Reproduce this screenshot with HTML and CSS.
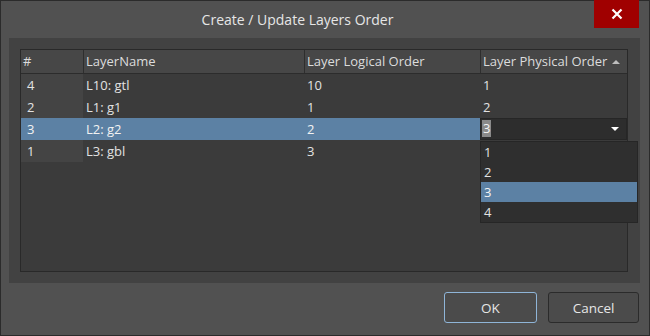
FILE: index.html
```html
<!DOCTYPE html>
<html>
<head>
<meta charset="utf-8">
<link rel="stylesheet" href="styles.css">
</head>
<body>
<div class="window">
  <div class="titlebar">
    <div class="title">Create / Update Layers Order</div>
    <div class="close"><svg width="12" height="12" viewBox="0 0 12 12"><path d="M1.5 1.5 L10.5 10.5 M10.5 1.5 L1.5 10.5" stroke="#fff" stroke-width="2.2"/></svg></div>
  </div>
  <div class="panel">
    <div class="grid">
      <div class="row header">
        <div class="cell c1">#</div>
        <div class="cell c2 sep">LayerName</div>
        <div class="cell c3 sep">Layer Logical Order</div>
        <div class="cell c4 sep">Layer Physical Order<span class="sort"></span></div>
      </div>
      <div class="row">
        <div class="cell c1 idx">4</div>
        <div class="cell c2">L10: gtl</div>
        <div class="cell c3">10</div>
        <div class="cell c4">1</div>
      </div>
      <div class="row">
        <div class="cell c1 idx">2</div>
        <div class="cell c2">L1: g1</div>
        <div class="cell c3">1</div>
        <div class="cell c4">2</div>
      </div>
      <div class="row selected">
        <div class="cell c1 idx">3</div>
        <div class="cell c2">L2: g2</div>
        <div class="cell c3">2</div>
        <div class="cell c4 editor">
          <span class="edit-val">3</span>
          <span class="drop-arrow"></span>
          <div class="dropdown">
            <div class="opt">1</div>
            <div class="opt">2</div>
            <div class="opt hot">3</div>
            <div class="opt">4</div>
          </div>
        </div>
      </div>
      <div class="row">
        <div class="cell c1 idx">1</div>
        <div class="cell c2">L3: gbl</div>
        <div class="cell c3">3</div>
        <div class="cell c4"></div>
      </div>
    </div>
  </div>
  <div class="footer">
    <button class="btn ok">OK</button>
    <button class="btn">Cancel</button>
  </div>
</div>
</body>
</html>
```
FILE: styles.css
```css
html, body {
  margin: 0;
  padding: 0;
  background: #2a2a2a;
}
body {
  font-family: "Open Sans", "Noto Sans", sans-serif;
  color: #e2e2e2;
}
.window {
  width: 650px;
  height: 336px;
  box-sizing: border-box;
  border: 1px solid #2b2b2b;
  background: #515151;
  display: flex;
  flex-direction: column;
}
.titlebar {
  height: 37px;
  display: flex;
  align-items: flex-start;
}
.title {
  flex: 1;
  text-align: center;
  font-size: 14px;
  line-height: 37px;
  color: #e6e6e6;
}
.close {
  width: 45px;
  height: 28px;
  margin-top: -1px;
  margin-right: 10px;
  background: #a00000;
  display: flex;
  align-items: center;
  justify-content: center;
}
.panel {
  margin: 0 9px 0 8px;
  height: 245px;
  box-sizing: border-box;
  padding: 11px 12px 11px 11px;
  background: #424242;
  display: flex;
}
.grid {
  flex: 1;
  border: 1px solid #292929;
  background: #3b3b3b;
  display: flex;
  flex-direction: column;
  font-size: 13px;
}
.row {
  display: flex;
  height: 22px;
  line-height: 22px;
}
.row.header {
  height: 23px;
  line-height: 23px;
  background: #474747;
  border-bottom: 1px solid #2c2c2c;
  color: #dcdcdc;
}
.cell {
  box-sizing: border-box;
  padding-left: 3px;
  white-space: nowrap;
  position: relative;
}
.c1 { width: 62px; padding-left: 2px; }
.c2 { width: 221px; }
.c3 { width: 176px; }
.c4 { flex: 1; }
.header .sep { border-left: 1px solid #2e2e2e; padding-left: 2px; }
.idx { background: #444444; padding-left: 6px; }
.selected { background: #5c81a4; color: #f2f2f2; }
.selected .idx { background: #5c81a4; }
.sort {
  position: absolute;
  right: 7px;
  top: 10px;
  width: 0;
  height: 0;
  border-left: 4px solid transparent;
  border-right: 4px solid transparent;
  border-bottom: 4px solid #bdbdbd;
}
.editor {
  background: #2d2d2d;
  border: 1px solid #262626;
  padding-left: 1px;
  line-height: 19px;
}
.edit-val {
  display: inline-block;
  background: #8a8a8a;
  color: #f4f4f4;
  padding: 0 1px;
  line-height: 17px;
  margin-top: 1px;
}
.drop-arrow {
  position: absolute;
  right: 7px;
  top: 8px;
  width: 0;
  height: 0;
  border-left: 4px solid transparent;
  border-right: 4px solid transparent;
  border-top: 4px solid #ffffff;
}
.dropdown {
  position: absolute;
  left: -1px;
  top: 22px;
  width: 158px;
  box-sizing: border-box;
  background: #2f2f2f;
  border: 1px solid #262626;
  z-index: 2;
}
.opt {
  height: 20px;
  line-height: 20px;
  padding-left: 3px;
  color: #e2e2e2;
}
.opt.hot { background: #5c81a4; color: #f4f4f4; }
.footer {
  flex: 1;
  display: flex;
  justify-content: flex-end;
  align-items: flex-start;
  gap: 11px;
  padding: 9px 10px 0 0;
}
.btn {
  font-family: "Open Sans", "Noto Sans", sans-serif;
  font-size: 13.5px;
  color: #e6e6e6;
  background: #4b4b4b;
  border: 1px solid #2b2b2b;
  border-radius: 3px;
  width: 91px;
  height: 31px;
  padding: 0;
}
.btn.ok {
  width: 93px;
  border-color: #8fb5d8;
}
```
